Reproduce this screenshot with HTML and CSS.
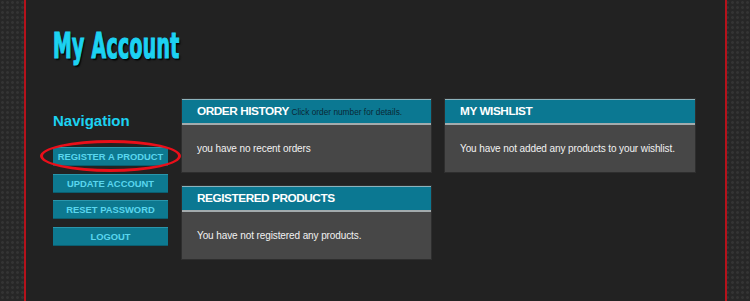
FILE: index.html
```html
<!DOCTYPE html>
<html lang="en">
<head>
  <meta charset="UTF-8">
  <title>My Account</title>
  <link rel="stylesheet" href="styles.css">
</head>
<body>
  <div class="page">
    <h1 class="page-title"><span>My Account</span></h1>

    <div class="account-layout">
      <!-- Left navigation -->
      <aside class="account-nav">
        <h3>Navigation</h3>
        <a href="#" class="nav-btn highlighted">REGISTER A PRODUCT</a>
        <a href="#" class="nav-btn">UPDATE ACCOUNT</a>
        <a href="#" class="nav-btn">RESET PASSWORD</a>
        <a href="#" class="nav-btn">LOGOUT</a>
      </aside>

      <!-- Panels -->
      <div class="panel-grid">
        <div class="panel">
          <div class="panel-head">ORDER HISTORY <small>Click order number for details.</small></div>
          <div class="panel-body">you have no recent orders</div>
        </div>
        <div class="panel">
          <div class="panel-head">MY WISHLIST</div>
          <div class="panel-body">You have not added any products to your wishlist.</div>
        </div>
        <div class="panel">
          <div class="panel-head">REGISTERED PRODUCTS</div>
          <div class="panel-body">You have not registered any products.</div>
        </div>
      </div>
    </div>
  </div>
</body>
</html>
```

FILE: styles.css
```css
html, body {
  margin: 0;
  height: 100%;
}
body {
  font-family: 'Liberation Sans', Arial, sans-serif;
  background-color: #272727;
  background-image: radial-gradient(circle, #343434 1.2px, transparent 1.6px);
  background-size: 5px 5px;
  overflow: hidden;
}
.page {
  margin: 0 23px 0 24px;
  height: 100%;
  background: #222222;
  border-left: 2px solid #b5121b;
  border-right: 2px solid #b5121b;
  padding-left: 27px;
  box-sizing: border-box;
}
.page-title {
  margin: 0;
  padding-top: 26px;
  height: 40px;
  line-height: 40px;
  font-family: 'DejaVu Sans Condensed', 'DejaVu Sans', sans-serif;
  font-stretch: condensed;
  font-size: 35px;
  font-weight: bold;
  color: #1cd2f2;
  text-shadow: 2px 2px 2px #000;
}
.page-title span {
  display: inline-block;
  transform: scaleX(0.6);
  transform-origin: left center;
  white-space: nowrap;
  -webkit-text-stroke: 1.2px #1cd2f2;
  letter-spacing: 0.5px;
}
.account-layout {
  display: flex;
  gap: 14px;
  margin-top: 33px;
}
.account-nav {
  width: 115px;
  display: flex;
  flex-direction: column;
  gap: 7.5px;
}
.account-nav h3 {
  margin: 13px 0 9.5px;
  font-size: 15px;
  line-height: 18px;
  color: #1cd2f2;
}
.nav-btn {
  position: relative;
  display: block;
  height: 19px;
  line-height: 19px;
  text-align: center;
  background: #0d7990;
  box-shadow: inset 0 1px 0 #2a96ac, inset 0 -1px 0 #0a5e70;
  color: #5ad6ee;
  font-size: 9.4px;
  font-weight: bold;
  text-decoration: none;
  white-space: nowrap;
}
.nav-btn.highlighted::after {
  content: "";
  position: absolute;
  left: -13px;
  right: -13px;
  top: -7px;
  bottom: -6px;
  border: 3.5px solid #ea0f1a;
  border-radius: 50%;
}
.panel-grid {
  display: grid;
  grid-template-columns: 249px 250px;
  gap: 14px;
  align-content: start;
}
.panel {
  background: #474747;
  box-shadow: 0 0 0 1px #2e2e2e;
}
.panel-head {
  height: 23px;
  line-height: 23px;
  padding-left: 15px;
  background: #0b7892;
  border-top: 1px solid #8cb3bd;
  border-bottom: 2px solid #a3abad;
  color: #fff;
  font-size: 11.8px;
  font-weight: bold;
  letter-spacing: -0.45px;
  white-space: nowrap;
}
.panel-head small {
  font-size: 8.3px;
  font-weight: normal;
  letter-spacing: 0;
  color: #0a2836;
}
.panel-body {
  height: 47px;
  display: flex;
  align-items: center;
  padding: 0 15px;
  color: #f2f2f2;
  font-size: 10px;
  letter-spacing: -0.1px;
}
```
